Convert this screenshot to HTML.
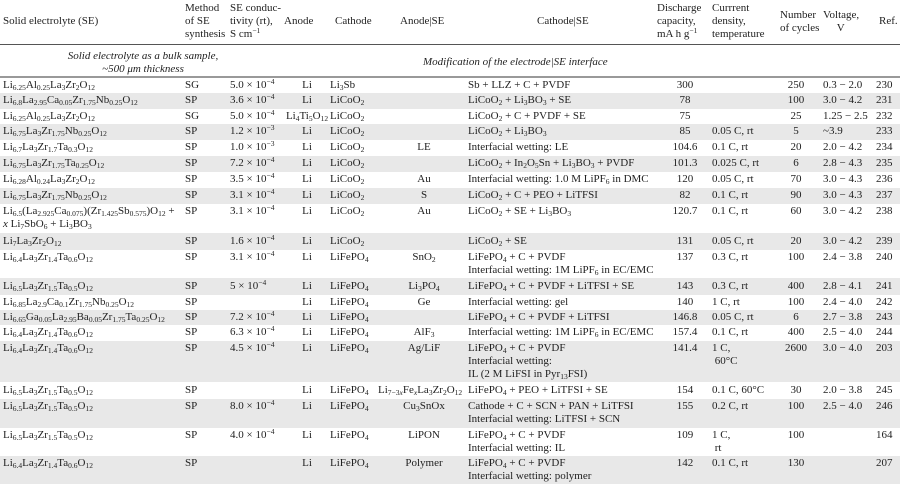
<!DOCTYPE html>
<html><head><meta charset="utf-8">
<style>
body{margin:0;background:#fff;}
#w{position:relative;width:900px;height:486px;overflow:hidden;font-family:"Liberation Serif",serif;font-size:11px;color:#222;}
.r{position:absolute;left:0;width:900px;}
.g{background:#e8e8e8;}
.c{position:absolute;top:1px;line-height:13px;white-space:nowrap;}
.c1{left:3px}.c2{left:185px}.c3{left:230px}
.c4{left:277px;width:60px;text-align:center}
.c5{left:330px}
.c6{left:368px;width:112px;text-align:center}
.c7{left:468px}
.c8{left:655px;width:60px;text-align:center}
.c9{left:712px}
.c10{left:771px;width:50px;text-align:center}
.c11{left:823px}
.c12{left:876px}
sub{font-size:7.5px;vertical-align:-2px;line-height:0}
sup{font-size:7.5px;vertical-align:4px;line-height:0}
.h{position:absolute;line-height:13px;white-space:nowrap}
.it{position:absolute;font-style:italic;line-height:13px;white-space:nowrap}
</style></head><body><div id="w">
<div class="h" style="left:3px;top:15px">Solid electrolyte (SE)</div>
<div class="h" style="left:185px;top:2px">Method<br>of SE<br>synthesis</div>
<div class="h" style="left:230px;top:2px">SE conduc-<br>tivity (rt),<br>S cm<sup>−1</sup></div>
<div class="h" style="left:284px;top:15px">Anode</div>
<div class="h" style="left:335px;top:15px">Cathode</div>
<div class="h" style="left:400px;top:15px">Anode|SE</div>
<div class="h" style="left:537px;top:15px">Cathode|SE</div>
<div class="h" style="left:657px;top:2px">Discharge<br>capacity,<br>mA h g<sup>−1</sup></div>
<div class="h" style="left:712px;top:2px">Currrent<br>density,<br>temperature</div>
<div class="h" style="left:780px;top:9px">Number<br>of cycles</div>
<div class="h" style="left:823px;top:9px">Voltage,<br>&nbsp;&nbsp;&nbsp;&nbsp;&nbsp;V</div>
<div class="h" style="left:879px;top:15px">Ref.</div>
<div style="position:absolute;left:0;top:44px;width:900px;height:1px;background:#555"></div>
<div class="it" style="left:0;top:50px;width:286px;text-align:center">Solid electrolyte as a bulk sample,<br>~500 μm thickness</div>
<div class="it" style="left:423px;top:56px">Modification of the electrode|SE interface</div>
<div style="position:absolute;left:0;top:76px;width:900px;height:2px;background:#999"></div>

<div class="r" style="top:78px;height:15px"><span class="c c1">Li<sub>6.25</sub>Al<sub>0.25</sub>La<sub>3</sub>Zr<sub>2</sub>O<sub>12</sub></span><span class="c c2">SG</span><span class="c c3">5.0 × 10<sup>−4</sup></span><span class="c c4">Li</span><span class="c c5">Li<sub>3</sub>Sb</span><span class="c c7">Sb + LLZ + C + PVDF</span><span class="c c8">300</span><span class="c c10">250</span><span class="c c11">0.3 − 2.0</span><span class="c c12">230</span></div>
<div class="r g" style="top:93px;height:16px"><span class="c c1">Li<sub>6.8</sub>La<sub>2.95</sub>Ca<sub>0.05</sub>Zr<sub>1.75</sub>Nb<sub>0.25</sub>O<sub>12</sub></span><span class="c c2">SP</span><span class="c c3">3.6 × 10<sup>−4</sup></span><span class="c c4">Li</span><span class="c c5">LiCoO<sub>2</sub></span><span class="c c7">LiCoO<sub>2</sub> + Li<sub>3</sub>BO<sub>3</sub> + SE</span><span class="c c8">78</span><span class="c c10">100</span><span class="c c11">3.0 − 4.2</span><span class="c c12">231</span></div>
<div class="r" style="top:109px;height:15px"><span class="c c1">Li<sub>6.25</sub>Al<sub>0.25</sub>La<sub>3</sub>Zr<sub>2</sub>O<sub>12</sub></span><span class="c c2">SG</span><span class="c c3">5.0 × 10<sup>−4</sup></span><span class="c c4">Li<sub>4</sub>Ti<sub>5</sub>O<sub>12</sub></span><span class="c c5">LiCoO<sub>2</sub></span><span class="c c7">LiCoO<sub>2</sub> + C + PVDF + SE</span><span class="c c8">75</span><span class="c c10">25</span><span class="c c11">1.25 − 2.5</span><span class="c c12">232</span></div>
<div class="r g" style="top:124px;height:16px"><span class="c c1">Li<sub>6.75</sub>La<sub>3</sub>Zr<sub>1.75</sub>Nb<sub>0.25</sub>O<sub>12</sub></span><span class="c c2">SP</span><span class="c c3">1.2 × 10<sup>−3</sup></span><span class="c c4">Li</span><span class="c c5">LiCoO<sub>2</sub></span><span class="c c7">LiCoO<sub>2</sub> + Li<sub>3</sub>BO<sub>3</sub></span><span class="c c8">85</span><span class="c c9">0.05 C, rt</span><span class="c c10">5</span><span class="c c11">~3.9</span><span class="c c12">233</span></div>
<div class="r" style="top:140px;height:16px"><span class="c c1">Li<sub>6.7</sub>La<sub>3</sub>Zr<sub>1.7</sub>Ta<sub>0.3</sub>O<sub>12</sub></span><span class="c c2">SP</span><span class="c c3">1.0 × 10<sup>−3</sup></span><span class="c c4">Li</span><span class="c c5">LiCoO<sub>2</sub></span><span class="c c6">LE</span><span class="c c7">Interfacial wetting: LE</span><span class="c c8">104.6</span><span class="c c9">0.1 C, rt</span><span class="c c10">20</span><span class="c c11">2.0 − 4.2</span><span class="c c12">234</span></div>
<div class="r g" style="top:156px;height:16px"><span class="c c1">Li<sub>6.75</sub>La<sub>3</sub>Zr<sub>1.75</sub>Ta<sub>0.25</sub>O<sub>12</sub></span><span class="c c2">SP</span><span class="c c3">7.2 × 10<sup>−4</sup></span><span class="c c4">Li</span><span class="c c5">LiCoO<sub>2</sub></span><span class="c c7">LiCoO<sub>2</sub> + In<sub>2</sub>O<sub>5</sub>Sn + Li<sub>3</sub>BO<sub>3</sub> + PVDF</span><span class="c c8">101.3</span><span class="c c9">0.025 C, rt</span><span class="c c10">6</span><span class="c c11">2.8 − 4.3</span><span class="c c12">235</span></div>
<div class="r" style="top:172px;height:16px"><span class="c c1">Li<sub>6.28</sub>Al<sub>0.24</sub>La<sub>3</sub>Zr<sub>2</sub>O<sub>12</sub></span><span class="c c2">SP</span><span class="c c3">3.5 × 10<sup>−4</sup></span><span class="c c4">Li</span><span class="c c5">LiCoO<sub>2</sub></span><span class="c c6">Au</span><span class="c c7">Interfacial wetting: 1.0 M LiPF<sub>6</sub> in DMC</span><span class="c c8">120</span><span class="c c9">0.05 C, rt</span><span class="c c10">70</span><span class="c c11">3.0 − 4.3</span><span class="c c12">236</span></div>
<div class="r g" style="top:188px;height:16px"><span class="c c1">Li<sub>6.75</sub>La<sub>3</sub>Zr<sub>1.75</sub>Nb<sub>0.25</sub>O<sub>12</sub></span><span class="c c2">SP</span><span class="c c3">3.1 × 10<sup>−4</sup></span><span class="c c4">Li</span><span class="c c5">LiCoO<sub>2</sub></span><span class="c c6">S</span><span class="c c7">LiCoO<sub>2</sub> + C + PEO + LiTFSI</span><span class="c c8">82</span><span class="c c9">0.1 C, rt</span><span class="c c10">90</span><span class="c c11">3.0 − 4.3</span><span class="c c12">237</span></div>
<div class="r" style="top:204px;height:29px"><span class="c c1">Li<sub>6.5</sub>(La<sub>2.925</sub>Ca<sub>0.075</sub>)(Zr<sub>1.425</sub>Sb<sub>0.575</sub>)O<sub>12</sub> +<br><i>x</i> Li<sub>7</sub>SbO<sub>6</sub> + Li<sub>3</sub>BO<sub>3</sub></span><span class="c c2">SP</span><span class="c c3">3.1 × 10<sup>−4</sup></span><span class="c c4">Li</span><span class="c c5">LiCoO<sub>2</sub></span><span class="c c6">Au</span><span class="c c7">LiCoO<sub>2</sub> + SE + Li<sub>3</sub>BO<sub>3</sub></span><span class="c c8">120.7</span><span class="c c9">0.1 C, rt</span><span class="c c10">60</span><span class="c c11">3.0 − 4.2</span><span class="c c12">238</span></div>
<div class="r g" style="top:233px;height:17px"><span class="c c1" style="top:2px">Li<sub>7</sub>La<sub>3</sub>Zr<sub>2</sub>O<sub>12</sub></span><span class="c c2" style="top:2px">SP</span><span class="c c3" style="top:2px">1.6 × 10<sup>−4</sup></span><span class="c c4" style="top:2px">Li</span><span class="c c5" style="top:2px">LiCoO<sub>2</sub></span><span class="c c7" style="top:2px">LiCoO<sub>2</sub> + SE</span><span class="c c8" style="top:2px">131</span><span class="c c9" style="top:2px">0.05 C, rt</span><span class="c c10" style="top:2px">20</span><span class="c c11" style="top:2px">3.0 − 4.2</span><span class="c c12" style="top:2px">239</span></div>
<div class="r" style="top:250px;height:28px"><span class="c c1">Li<sub>6.4</sub>La<sub>3</sub>Zr<sub>1.4</sub>Ta<sub>0.6</sub>O<sub>12</sub></span><span class="c c2">SP</span><span class="c c3">3.1 × 10<sup>−4</sup></span><span class="c c4">Li</span><span class="c c5">LiFePO<sub>4</sub></span><span class="c c6">SnO<sub>2</sub></span><span class="c c7">LiFePO<sub>4</sub> + C + PVDF<br>Interfacial wetting: 1M LiPF<sub>6</sub> in EC/EMC</span><span class="c c8">137</span><span class="c c9">0.3 C, rt</span><span class="c c10">100</span><span class="c c11">2.4 − 3.8</span><span class="c c12">240</span></div>
<div class="r g" style="top:278px;height:17px"><span class="c c1" style="top:2px">Li<sub>6.5</sub>La<sub>3</sub>Zr<sub>1.5</sub>Ta<sub>0.5</sub>O<sub>12</sub></span><span class="c c2" style="top:2px">SP</span><span class="c c3" style="top:2px">5 × 10<sup>−4</sup></span><span class="c c4" style="top:2px">Li</span><span class="c c5" style="top:2px">LiFePO<sub>4</sub></span><span class="c c6" style="top:2px">Li<sub>3</sub>PO<sub>4</sub></span><span class="c c7" style="top:2px">LiFePO<sub>4</sub> + C + PVDF + LiTFSI + SE</span><span class="c c8" style="top:2px">143</span><span class="c c9" style="top:2px">0.3 C, rt</span><span class="c c10" style="top:2px">400</span><span class="c c11" style="top:2px">2.8 − 4.1</span><span class="c c12" style="top:2px">241</span></div>
<div class="r" style="top:295px;height:15px"><span class="c c1">Li<sub>6.85</sub>La<sub>2.9</sub>Ca<sub>0.1</sub>Zr<sub>1.75</sub>Nb<sub>0.25</sub>O<sub>12</sub></span><span class="c c2">SP</span><span class="c c4">Li</span><span class="c c5">LiFePO<sub>4</sub></span><span class="c c6">Ge</span><span class="c c7">Interfacial wetting: gel</span><span class="c c8">140</span><span class="c c9">1 C, rt</span><span class="c c10">100</span><span class="c c11">2.4 − 4.0</span><span class="c c12">242</span></div>
<div class="r g" style="top:310px;height:15px"><span class="c c1">Li<sub>6.65</sub>Ga<sub>0.05</sub>La<sub>2.95</sub>Ba<sub>0.05</sub>Zr<sub>1.75</sub>Ta<sub>0.25</sub>O<sub>12</sub></span><span class="c c2">SP</span><span class="c c3">7.2 × 10<sup>−4</sup></span><span class="c c4">Li</span><span class="c c5">LiFePO<sub>4</sub></span><span class="c c7">LiFePO<sub>4</sub> + C + PVDF + LiTFSI</span><span class="c c8">146.8</span><span class="c c9">0.05 C, rt</span><span class="c c10">6</span><span class="c c11">2.7 − 3.8</span><span class="c c12">243</span></div>
<div class="r" style="top:325px;height:16px"><span class="c c1">Li<sub>6.4</sub>La<sub>3</sub>Zr<sub>1.4</sub>Ta<sub>0.6</sub>O<sub>12</sub></span><span class="c c2">SP</span><span class="c c3">6.3 × 10<sup>−4</sup></span><span class="c c4">Li</span><span class="c c5">LiFePO<sub>4</sub></span><span class="c c6">AlF<sub>3</sub></span><span class="c c7">Interfacial wetting: 1M LiPF<sub>6</sub> in EC/EMC</span><span class="c c8">157.4</span><span class="c c9">0.1 C, rt</span><span class="c c10">400</span><span class="c c11">2.5 − 4.0</span><span class="c c12">244</span></div>
<div class="r g" style="top:341px;height:41px"><span class="c c1">Li<sub>6.4</sub>La<sub>3</sub>Zr<sub>1.4</sub>Ta<sub>0.6</sub>O<sub>12</sub></span><span class="c c2">SP</span><span class="c c3">4.5 × 10<sup>−4</sup></span><span class="c c4">Li</span><span class="c c5">LiFePO<sub>4</sub></span><span class="c c6">Ag/LiF</span><span class="c c7">LiFePO<sub>4</sub> + C + PVDF<br>Interfacial wetting:<br>IL (2 M LiFSI in Pyr<sub>13</sub>FSI)</span><span class="c c8">141.4</span><span class="c c9">1 C,<br>&nbsp;60°C</span><span class="c c10">2600</span><span class="c c11">3.0 − 4.0</span><span class="c c12">203</span></div>
<div class="r" style="top:382px;height:17px"><span class="c c1" style="top:2px">Li<sub>6.5</sub>La<sub>3</sub>Zr<sub>1.5</sub>Ta<sub>0.5</sub>O<sub>12</sub></span><span class="c c2" style="top:2px">SP</span><span class="c c4" style="top:2px">Li</span><span class="c c5" style="top:2px">LiFePO<sub>4</sub></span><span class="c" style="top:2px;left:378px">Li<sub>7−3<i>x</i></sub>Fe<sub><i>x</i></sub>La<sub>3</sub>Zr<sub>2</sub>O<sub>12</sub></span><span class="c c7" style="top:2px">LiFePO<sub>4</sub> + PEO + LiTFSI + SE</span><span class="c c8" style="top:2px">154</span><span class="c c9" style="top:2px">0.1 C, 60°C</span><span class="c c10" style="top:2px">30</span><span class="c c11" style="top:2px">2.0 − 3.8</span><span class="c c12" style="top:2px">245</span></div>
<div class="r g" style="top:399px;height:29px"><span class="c c1">Li<sub>6.5</sub>La<sub>3</sub>Zr<sub>1.5</sub>Ta<sub>0.5</sub>O<sub>12</sub></span><span class="c c2">SP</span><span class="c c3">8.0 × 10<sup>−4</sup></span><span class="c c4">Li</span><span class="c c5">LiFePO<sub>4</sub></span><span class="c c6">Cu<sub>3</sub>SnOx</span><span class="c c7">Cathode + C + SCN + PAN + LiTFSI<br>Interfacial wetting: LiTFSI + SCN</span><span class="c c8">155</span><span class="c c9">0.2 C, rt</span><span class="c c10">100</span><span class="c c11">2.5 − 4.0</span><span class="c c12">246</span></div>
<div class="r" style="top:428px;height:28px"><span class="c c1">Li<sub>6.5</sub>La<sub>3</sub>Zr<sub>1.5</sub>Ta<sub>0.5</sub>O<sub>12</sub></span><span class="c c2">SP</span><span class="c c3">4.0 × 10<sup>−4</sup></span><span class="c c4">Li</span><span class="c c5">LiFePO<sub>4</sub></span><span class="c c6">LiPON</span><span class="c c7">LiFePO<sub>4</sub> + C + PVDF<br>Interfacial wetting: IL</span><span class="c c8">109</span><span class="c c9">1 C,<br>&nbsp;rt</span><span class="c c10">100</span><span class="c c12">164</span></div>
<div class="r g" style="top:456px;height:28px"><span class="c c1">Li<sub>6.4</sub>La<sub>3</sub>Zr<sub>1.4</sub>Ta<sub>0.6</sub>O<sub>12</sub></span><span class="c c2">SP</span><span class="c c4">Li</span><span class="c c5">LiFePO<sub>4</sub></span><span class="c c6">Polymer</span><span class="c c7">LiFePO<sub>4</sub> + C + PVDF<br>Interfacial wetting: polymer</span><span class="c c8">142</span><span class="c c9">0.1 C, rt</span><span class="c c10">130</span><span class="c c12">207</span></div>
</div></body></html>
